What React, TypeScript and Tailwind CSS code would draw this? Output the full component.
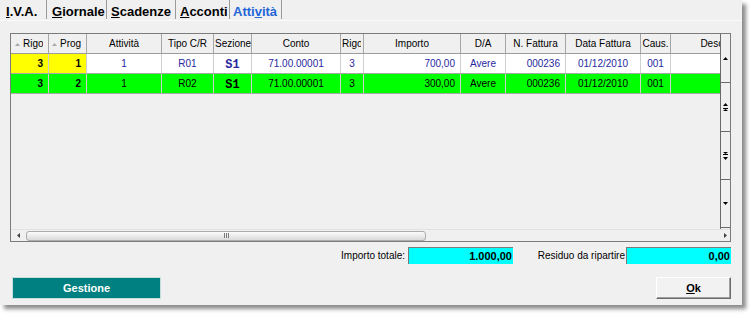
import React from "react";

type Col = {
  w: string;
  h: string;
  sort?: boolean;
  hcls: string;
  dcls: string;
  clip?: string;
};

const cols: Col[] = [
  { w: "w-[38px]", h: "Rigo", sort: true, hcls: "justify-start pl-[4px]", dcls: "justify-end pr-[5px] font-bold text-black", clip: "w-[20px]" },
  { w: "w-[38px]", h: "Prog", sort: true, hcls: "justify-start pl-[3px]", dcls: "justify-end pr-[5px] font-bold text-black", clip: "w-[23px]" },
  { w: "w-[75px]", h: "Attività", hcls: "justify-center", dcls: "justify-center" },
  { w: "w-[52px]", h: "Tipo C/R", hcls: "justify-center", dcls: "justify-center" },
  { w: "w-[38px]", h: "Sezione", hcls: "justify-start pl-[1px]", dcls: "justify-center" },
  { w: "w-[89px]", h: "Conto", hcls: "justify-center", dcls: "justify-center" },
  { w: "w-[23px]", h: "Rigo", hcls: "justify-start pl-[1px]", dcls: "justify-center", clip: "w-[19px]" },
  { w: "w-[97px]", h: "Importo", hcls: "justify-center", dcls: "justify-end pr-[5px]" },
  { w: "w-[45px]", h: "D/A", hcls: "justify-center", dcls: "justify-center" },
  { w: "w-[60px]", h: "N. Fattura", hcls: "justify-center", dcls: "justify-end pr-[5px]" },
  { w: "w-[75px]", h: "Data Fattura", hcls: "justify-center", dcls: "justify-center" },
  { w: "w-[30px]", h: "Caus.", hcls: "justify-center", dcls: "justify-center" },
  { w: "w-[112px]", h: "Descrizione", hcls: "justify-center", dcls: "justify-center" },
];

const rows = [
  ["3", "1", "1", "R01", "S1", "71.00.00001", "3", "700,00", "Avere", "000236", "01/12/2010", "001", ""],
  ["3", "2", "1", "R02", "S1", "71.00.00001", "3", "300,00", "Avere", "000236", "01/12/2010", "001", ""],
];

function Tri({ dir, color = "#000" }: { dir: "up" | "down" | "left" | "right"; color?: string }) {
  const pts =
    dir === "up" ? "0,3 5,3 2.5,0" : dir === "down" ? "0,0 5,0 2.5,3" : dir === "left" ? "3,0 3,5 0,2.5" : "0,0 0,5 3,2.5";
  const w = dir === "up" || dir === "down" ? 5 : 3;
  const h = dir === "up" || dir === "down" ? 3 : 5;
  return (
    <svg width={w} height={h} viewBox={`0 0 ${w} ${h}`} className="block">
      <polygon points={pts} fill={color} />
    </svg>
  );
}

function PageGlyph({ up }: { up: boolean }) {
  return (
    <svg width="5" height="8" viewBox="0 0 5 8" className="block">
      {up ? (
        <>
          <polygon points="0,3 5,3 2.5,0" fill="#000" />
          <rect x="0" y="5" width="5" height="1" fill="#000" />
          <polygon points="0,8 5,8 2.5,6" fill="#000" />
        </>
      ) : (
        <>
          <polygon points="0,0 5,0 2.5,2" fill="#000" />
          <rect x="0" y="2" width="5" height="1" fill="#000" />
          <polygon points="0,5 5,5 2.5,8" fill="#000" />
        </>
      )}
    </svg>
  );
}

export default function App() {
  return (
    <div className="w-[752px] h-[316px] bg-white font-['Liberation_Sans',Arial,sans-serif] text-black">
      <div className="w-[742px] h-[305px] bg-[#f0f0f0] shadow-[4px_4px_4px_rgba(0,0,0,0.45)] flex flex-col">
        {/* Tabs */}
        <div className="h-[21px] flex border-b border-[#fbfbfb] text-[13px] font-bold leading-[15px]">
          <div className="w-[47px] h-[19px] border-r border-[#9a9a9a] pl-[6px] pt-[4px] whitespace-nowrap">
            <span className="underline">I</span>.V.A.
          </div>
          <div className="w-[60px] h-[19px] border-r border-[#9a9a9a] pl-[5px] pt-[4px] whitespace-nowrap">
            <span className="underline">G</span>iornale
          </div>
          <div className="w-[69px] h-[19px] border-r border-[#9a9a9a] pl-[4px] pt-[4px] whitespace-nowrap">
            <span className="underline">S</span>cadenze
          </div>
          <div className="w-[54px] h-[19px] border-r border-[#9a9a9a] pl-[4px] pt-[4px] whitespace-nowrap">
            <span className="underline">A</span>cconti
          </div>
          <div className="w-[52px] h-[19px] border-r border-[#9a9a9a] pl-[3px] pt-[4px] whitespace-nowrap text-[#2366d8]">
            Atti<span className="underline">v</span>ità
          </div>
        </div>

        {/* Grid */}
        <div className="mt-[12px] ml-[10px] w-[721px] h-[209px] border border-[#7c7c7c] flex flex-col">
          <div className="flex h-[195px]">
            <div className="w-[709px] h-full overflow-hidden bg-[#f0f0f0] text-[10px]">
              {/* header */}
              <div className="flex h-[20px] border-b border-[#9c9c9c] bg-[#f0f0f0] w-[800px]">
                {cols.map((c, i) => (
                  <div
                    key={i}
                    className={`${c.w} shrink-0 h-full flex items-center overflow-hidden whitespace-nowrap border-r border-[#a6a6a6] ${c.hcls}`}
                  >
                    {c.sort && (
                      <span className="mr-[3px] mt-[1px]">
                        <Tri dir="up" color="#a8a8a8" />
                      </span>
                    )}
                    {c.clip ? (
                      <span className={`${c.clip} inline-block overflow-hidden whitespace-nowrap`}>{c.h}</span>
                    ) : (
                      <span>{c.h}</span>
                    )}
                  </div>
                ))}
              </div>
              {/* rows */}
              {rows.map((r, ri) => (
                <div key={ri} className="flex h-[20px] border-b border-[#a8a8a8] w-[800px]">
                  {cols.map((c, ci) => {
                    const bg =
                      ri === 1 ? "bg-[#00ff00]" : ci < 2 ? "bg-[#ffff00]" : "bg-white";
                    const color = ri === 1 ? "text-black" : "text-[#2828a0]";
                    const isSez = ci === 4;
                    return (
                      <div
                        key={ci}
                        className={`${c.w} shrink-0 h-full flex items-center overflow-hidden whitespace-nowrap border-r border-[#cfcfcf] ${bg} ${color} ${c.dcls}`}
                      >
                        {isSez ? (
                          <span className="font-['Liberation_Mono',monospace] font-bold text-[12px] mt-[3px]">{r[ci]}</span>
                        ) : (
                          r[ci]
                        )}
                      </div>
                    );
                  })}
                </div>
              ))}
            </div>
            {/* vertical scrollbar */}
            <div className="w-[10px] h-full flex flex-col border-l border-[#6a6a6a] bg-[#f0f0f0]">
              <div className="h-[49px] border-b border-[#6a6a6a] flex items-center justify-center">
                <Tri dir="up" />
              </div>
              <div className="h-[49px] border-b border-[#6a6a6a] flex items-center justify-center">
                <PageGlyph up />
              </div>
              <div className="h-[48px] border-b border-[#6a6a6a] flex items-center justify-center">
                <PageGlyph up={false} />
              </div>
              <div className="h-[48px] border-b border-[#6a6a6a] flex items-center justify-center">
                <Tri dir="down" />
              </div>
            </div>
          </div>
          {/* horizontal scrollbar */}
          <div className="h-[12px] flex items-center bg-[#f0f0f0] border-t border-[#e2e2e2]">
            <div className="w-[15px] flex justify-center">
              <Tri dir="left" color="#404040" />
            </div>
            <div className="w-[400px] h-[10px] rounded-[3px] border border-[#acacac] bg-gradient-to-b from-[#fbfbfb] to-[#dadada] flex items-center justify-center">
              <div className="flex gap-[1px]">
                <div className="w-[1px] h-[5px] bg-[#7a7a7a]" />
                <div className="w-[1px] h-[5px] bg-[#7a7a7a]" />
                <div className="w-[1px] h-[5px] bg-[#7a7a7a]" />
              </div>
            </div>
            <div className="flex-1" />
            <div className="w-[10px] flex justify-center">
              <Tri dir="right" color="#404040" />
            </div>
          </div>
        </div>

        {/* totals */}
        <div className="mt-[5px] h-[17px] flex items-center text-[10px]">
          <div className="w-[405px] text-right">Importo totale:</div>
          <div className="ml-[3px] w-[105px] h-[17px] bg-[#00ffff] border-t border-l border-t-[#7a7a7a] border-l-[#7a7a7a] flex items-center justify-end pr-[1px] text-[11px] font-bold">
            1.000,00
          </div>
          <div className="w-[112px] text-right whitespace-nowrap">Residuo da ripartire</div>
          <div className="ml-[1px] w-[105px] h-[17px] bg-[#00ffff] border-t border-l border-t-[#7a7a7a] border-l-[#7a7a7a] flex items-center justify-end pr-[1px] text-[11px] font-bold">
            0,00
          </div>
        </div>

        {/* buttons */}
        <div className="mt-[13px] h-[22px] flex justify-between pl-[12px] pr-[11px]">
          <div className="w-[149px] h-[22px] bg-[#008080] border border-[#c4dede] flex items-center justify-center text-white font-bold text-[11px]">
            Gestione
          </div>
          <div className="w-[75px] h-[22px] bg-[#f2f2f2] border border-t-white border-l-white border-r-[#6a6a6a] border-b-[#6a6a6a] shadow-[inset_-1px_-1px_0_#a0a0a0] flex items-center justify-center font-bold text-[11px]">
            <span className="underline">O</span>k
          </div>
        </div>
      </div>
    </div>
  );
}
